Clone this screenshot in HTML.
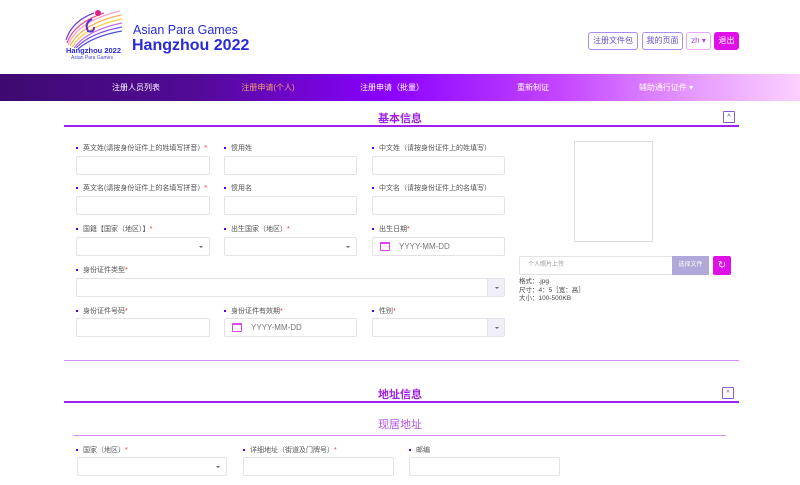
<!DOCTYPE html>
<html><head><meta charset="utf-8"><style>
*{margin:0;padding:0;box-sizing:border-box}
body{width:800px;height:485px;overflow:hidden;background:#fff;font-family:"Liberation Sans","Noto Sans CJK SC",sans-serif;position:relative}
.a{position:absolute}
.lbl{position:absolute;font-size:7px;color:#555;white-space:nowrap}
.lbl:before{content:"";display:inline-block;width:2px;height:2px;background:#5a00e0;margin-right:5px;vertical-align:middle}
.lbl i{color:#e33;font-style:normal}
.in{position:absolute;height:19px;border:1px solid #e2e2e8;border-radius:2px;background:#fff}
.sel:after{content:"";position:absolute;right:6px;top:8px;border-left:2px solid transparent;border-right:2px solid transparent;border-top:2px solid #666}
.dd{position:absolute;right:0;top:0;bottom:0;width:17px;background:#f0eef6;border-left:1px solid #e2e2e8}
.dd:after{content:"";position:absolute;left:7px;top:8px;border-left:2px solid transparent;border-right:2px solid transparent;border-top:2px solid #666}
.date{font-size:8px;color:#777;padding-left:26px;line-height:17px}
.cal{position:absolute;left:7px;top:4px;width:10px;height:9px;border:1.3px solid #e040f0;border-top-width:2px;border-radius:1px}
.btn{position:absolute;top:32px;height:18px;border:1px solid #a98cf0;border-radius:3px;font-size:8px;color:#6a4fd0;text-align:center;line-height:16px}
.nav{position:absolute;top:74px;left:0;width:800px;height:27px;background:linear-gradient(90deg,#3e0a70 0%,#520a98 25%,#8a00ff 48%,#c445ff 70%,#e8a0ff 88%,#fbd0ff 100%)}
.nav span{position:absolute;top:8px;font-size:8px;color:#fff;transform:translateX(-50%);white-space:nowrap}
.coll{position:absolute;width:12px;height:12px;border:1px solid #8a5ad0;border-radius:1px;font-size:7px;color:#5a2ab0;text-align:center;line-height:12px}
</style></head><body>
<svg class="a" style="left:64px;top:7px" width="60" height="42" viewBox="0 0 60 42">
<g fill="none" stroke-width="1.2">
<path d="M4 38 Q14 14 56 4" stroke="#f5a0c8"/>
<path d="M6 39 Q17 17 57 8" stroke="#f7b050"/>
<path d="M8 40 Q20 20 58 12" stroke="#f4d040"/>
<path d="M10 41 Q23 23 58 16" stroke="#c070f0"/>
<path d="M12 41 Q26 26 58 20" stroke="#8050f0"/>
<path d="M14 42 Q29 29 58 24" stroke="#5050e0"/>
<path d="M3 36 Q10 16 40 6" stroke="#e85090"/>
<path d="M2 33 Q8 14 30 6" stroke="#7040e0"/>
</g>
<circle cx="34" cy="6" r="3" fill="#e0208a"/>
<path d="M28 12 Q20 16 24 24 Q30 26 30 20" fill="none" stroke="#6030d0" stroke-width="2"/>
</svg>
<div class="a" style="left:66px;top:46px;font-size:7.5px;font-weight:bold;color:#2a2ad8">Hangzhou 2022</div>
<div class="a" style="left:71px;top:55px;font-size:5px;color:#4a4ad8">Asian Para Games</div>
<div class="a" style="left:133px;top:23px;font-size:12.5px;color:#2a2ad8">Asian Para Games</div>
<div class="a" style="left:132px;top:37px;font-size:16px;font-weight:bold;color:#2a2ad8">Hangzhou 2022</div>
<div class="btn" style="left:588px;width:50px">注册文件包</div>
<div class="btn" style="left:642px;width:41px">我的页面</div>
<div class="btn" style="left:686px;width:25px;border-color:#e8a8f8;color:#b040e0">zh ▾</div>
<div class="btn" style="left:714px;width:25px;background:#e010e8;border-color:#e010e8;color:#fff">退出</div>
<div class="nav">
<span style="left:136px">注册人员列表</span>
<span style="left:268px;color:#f0a070">注册申请(个人)</span>
<span style="left:392px">注册申请（批量）</span>
<span style="left:533px">重新制证</span>
<span style="left:666px">辅助通行证件 ▾</span>
</div>
<div class="a" style="left:0;width:800px;top:110px;text-align:center;font-size:11px;font-weight:bold;color:#a020e8">基本信息</div>
<div class="coll" style="left:723px;top:111px">^</div>
<div class="a" style="left:64px;top:125px;width:675px;height:2px;background:#a020f0"></div>

<div class="lbl" style="left:76px;top:143px">英文姓(请按身份证件上的姓填写拼音）<i>*</i></div>
<div class="lbl" style="left:224px;top:143px">惯用姓</div>
<div class="lbl" style="left:372px;top:143px">中文姓（请按身份证件上的姓填写）</div>
<div class="in" style="left:76px;top:156px;width:134px"></div>
<div class="in" style="left:224px;top:156px;width:133px"></div>
<div class="in" style="left:372px;top:156px;width:133px"></div>

<div class="lbl" style="left:76px;top:183px">英文名(请按身份证件上的名填写拼音）<i>*</i></div>
<div class="lbl" style="left:224px;top:183px">惯用名</div>
<div class="lbl" style="left:372px;top:183px">中文名（请按身份证件上的名填写）</div>
<div class="in" style="left:76px;top:196px;width:134px"></div>
<div class="in" style="left:224px;top:196px;width:133px"></div>
<div class="in" style="left:372px;top:196px;width:133px"></div>

<div class="lbl" style="left:76px;top:224px">国籍【国家（地区）】<i>*</i></div>
<div class="lbl" style="left:224px;top:224px">出生国家（地区）<i>*</i></div>
<div class="lbl" style="left:372px;top:224px">出生日期<i>*</i></div>
<div class="in sel" style="left:76px;top:237px;width:134px"></div>
<div class="in sel" style="left:224px;top:237px;width:133px"></div>
<div class="in date" style="left:372px;top:237px;width:133px"><span class="cal"></span>YYYY-MM-DD</div>

<div class="lbl" style="left:76px;top:265px">身份证件类型<i>*</i></div>
<div class="in" style="left:76px;top:278px;width:429px"><span class="dd"></span></div>

<div class="lbl" style="left:76px;top:306px">身份证件号码<i>*</i></div>
<div class="lbl" style="left:224px;top:306px">身份证件有效期<i>*</i></div>
<div class="lbl" style="left:372px;top:306px">性别<i>*</i></div>
<div class="in" style="left:76px;top:318px;width:134px"></div>
<div class="in date" style="left:224px;top:318px;width:133px"><span class="cal"></span>YYYY-MM-DD</div>
<div class="in" style="left:372px;top:318px;width:133px"><span class="dd"></span></div>

<div class="a" style="left:574px;top:141px;width:79px;height:101px;border:1px solid #ddd"></div>
<div class="in" style="left:519px;top:256px;width:154px;font-size:6px;color:#999;padding-left:8px;line-height:17px">个人照片上传</div>
<div class="a" style="left:672px;top:256px;width:37px;height:19px;background:#b0a8d8;color:#fff;font-size:6px;text-align:center;line-height:19px">选择文件</div>
<div class="a" style="left:713px;top:256px;width:18px;height:19px;background:#e010e8;border-radius:2px;color:#fff;font-size:10px;text-align:center;line-height:19px">↻</div>
<div class="a" style="left:519px;top:278px;font-size:6.5px;color:#444;line-height:8.5px">格式：.jpg<br>尺寸：4：5［宽：高］<br>大小：100-500KB</div>

<div class="a" style="left:64px;top:360px;width:675px;height:1px;background:#d890f8"></div>
<div class="a" style="left:0;width:800px;top:386px;text-align:center;font-size:11px;font-weight:bold;color:#a020e8">地址信息</div>
<div class="coll" style="left:722px;top:387px">^</div>
<div class="a" style="left:64px;top:401px;width:675px;height:2px;background:#a020f0"></div>
<div class="a" style="left:0;width:800px;top:416px;text-align:center;font-size:11px;color:#b050e8">现居地址</div>
<div class="a" style="left:73px;top:435px;width:653px;height:1px;background:#d890f8"></div>

<div class="lbl" style="left:76px;top:445px">国家（地区）<i>*</i></div>
<div class="lbl" style="left:243px;top:445px">详细地址（街道及门牌号）<i>*</i></div>
<div class="lbl" style="left:409px;top:445px">邮编</div>
<div class="in sel" style="left:77px;top:457px;width:150px"></div>
<div class="in" style="left:243px;top:457px;width:151px"></div>
<div class="in" style="left:409px;top:457px;width:151px"></div>
</body></html>
